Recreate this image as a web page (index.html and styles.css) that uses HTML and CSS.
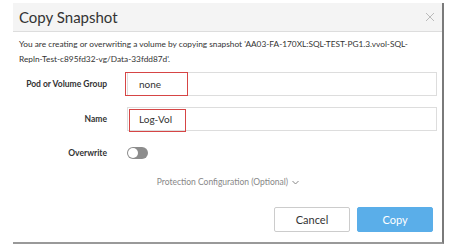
FILE: index.html
```html
<!DOCTYPE html>
<html lang="en">
<head>
    <meta charset="UTF-8">
    <meta name="viewport" content="width=device-width, initial-scale=1.0">
    <title>Copy Snapshot</title>
    <link rel="stylesheet" href="styles.css">
</head>
<body>
    <div class="dialog">
        <div class="dialog-header">
            <h1>Copy Snapshot</h1>
            <svg class="close" width="10" height="10" viewBox="0 0 10 10">
                <path d="M1 1 L9 9 M9 1 L1 9" stroke="#bbb" stroke-width="1" fill="none"/>
            </svg>
        </div>

        <div class="dialog-body">
            <p class="intro">You are creating or overwriting a volume by copying snapshot 'AA03-FA-170XL:SQL-TEST-PG1.3.vvol-SQL-<br>Repln-Test-c895fd32-vg/Data-33fdd87d'.</p>

            <div class="form-row">
                <label for="pod">Pod or Volume Group</label>
                <div class="field">
                    <input type="text" id="pod" value="none">
                    <span class="mark mark-pod"></span>
                </div>
            </div>

            <div class="form-row">
                <label for="name">Name</label>
                <div class="field">
                    <input type="text" id="name" value="Log-Vol">
                    <span class="mark mark-name"></span>
                </div>
            </div>

            <div class="form-row toggle-row">
                <label>Overwrite</label>
                <span class="toggle"><span class="knob"></span></span>
            </div>

            <div class="protection">Protection Configuration (Optional)
                <svg class="chevron" width="7" height="5" viewBox="0 0 7 5">
                    <path d="M0.5 1 L3.5 4 L6.5 1" stroke="#888" stroke-width="1" fill="none"/>
                </svg>
            </div>
        </div>

        <div class="dialog-footer">
            <button class="btn cancel">Cancel</button>
            <button class="btn copy">Copy</button>
        </div>
    </div>
</body>
</html>
```

FILE: styles.css
```css
body {
    margin: 0;
    padding: 0;
    background-color: #fff;
    font-family: Lato, "Open Sans", sans-serif;
    color: #333;
}

.dialog {
    margin: 3px 0 0 13px;
    width: 429px;
    height: 239px;
    border-right: 2px solid #7a7a7a;
    border-bottom: 2px solid #999;
    display: flex;
    flex-direction: column;
}

.dialog-header {
    display: flex;
    justify-content: space-between;
    align-items: center;
    height: 28px;
    padding: 0 7px 0 6px;
    background-color: #f4f4f4;
    border-bottom: 1px solid #ddd;
}

.dialog-header h1 {
    margin: 0;
    font-size: 15px;
    font-weight: normal;
    color: #333;
}

.dialog-body {
    padding: 5px 5px 0 6px;
}

.intro {
    margin: 0 0 5px;
    font-size: 8.3px;
    line-height: 15px;
    color: #333;
}

.form-row {
    display: flex;
    align-items: center;
    margin-bottom: 11px;
}

.form-row label {
    width: 88px;
    margin-right: 20px;
    text-align: right;
    font-size: 8.5px;
    font-weight: bold;
    color: #333;
}

.field {
    flex: 1;
    position: relative;
}

.field input {
    box-sizing: border-box;
    width: 100%;
    height: 24px;
    padding: 0 11px;
    border: 1px solid #ddd;
    font-family: Lato, "Open Sans", sans-serif;
    font-size: 10px;
    color: #333;
    background-color: #fff;
    outline: none;
}

.mark {
    position: absolute;
    border: 1.5px solid #d64545;
    box-sizing: border-box;
}

.mark-pod {
    left: -2px;
    top: 0;
    width: 63px;
    height: 24px;
}

.mark-name {
    left: 2px;
    top: 2px;
    width: 57px;
    height: 23px;
}

.toggle-row {
    margin-top: 16px;
}

.toggle {
    box-sizing: border-box;
    display: inline-block;
    width: 21px;
    height: 12px;
    border-radius: 6px;
    background-color: #8c8c8c;
    padding: 1px;
}

.knob {
    display: block;
    width: 10px;
    height: 10px;
    border-radius: 50%;
    background-color: #fff;
}

.protection {
    margin-top: 18px;
    text-align: center;
    font-size: 8.5px;
    color: #888;
}

.chevron {
    margin-left: 2px;
    vertical-align: middle;
}

.dialog-footer {
    margin-top: auto;
    display: flex;
    justify-content: flex-end;
    gap: 7px;
    padding: 0 9px 10px 0;
}

.btn {
    width: 76px;
    height: 25px;
    border-radius: 2px;
    font-family: Lato, "Open Sans", sans-serif;
    font-size: 11px;
    cursor: pointer;
}

.btn.cancel {
    background-color: #fff;
    border: 1px solid #ccc;
    color: #333;
}

.btn.copy {
    background-color: #5aaee9;
    border: 1px solid #5aaee9;
    color: #fff;
}
```
